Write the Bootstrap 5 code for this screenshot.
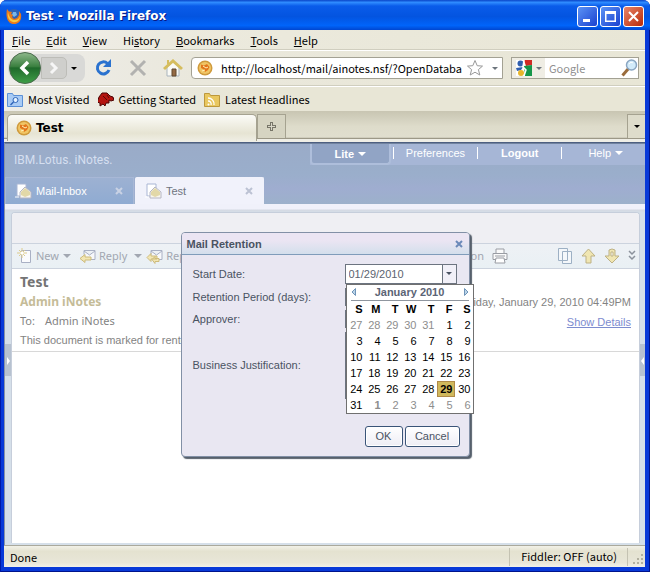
<!DOCTYPE html>
<html lang="en">
<head>
<meta charset="utf-8">
<meta name="viewport" content="width=device-width, initial-scale=1">
<title>Test - Mozilla Firefox</title>
<link rel="stylesheet" href="https://cdn.jsdelivr.net/npm/bootstrap@5.3.0/dist/css/bootstrap.min.css">
<style>
body{font:11px/16px "Noto Sans CJK JP","Noto Sans",sans-serif;color:#000;background:#fff}
svg{display:block;flex:none}
button,input,textarea{font:inherit;color:inherit}
.bare{border:0;background:none;padding:0}
.frame{background:#0839d8;padding:0 5px 5px 4px;border-radius:7px 7px 0 0;box-shadow:inset 1px 0 #0019a8,inset -1px -1px #00138c}
.titlebar{height:30px;margin:0 -5px 0 -4px;padding:2px 6px 0;border-radius:7px 7px 0 0;background:linear-gradient(#0a45c8 0,#2f8cff 8%,#0a5cea 20%,#0354e0 55%,#0064fa 85%,#0046d0 100%);color:#fff}
.titletext{font:bold 12px/16px "DejaVu Sans",sans-serif;text-shadow:1px 1px #0a1883}
.winbtn{width:21px;height:21px;border:1px solid #fff;border-radius:3px;padding:0;background:linear-gradient(135deg,#5c93f5,#1941d0);color:#fff;display:grid;place-items:center}
.winbtn.shut{background:linear-gradient(135deg,#e88468,#b92a08)}
.menubar{height:20px;padding:0 8px;background:linear-gradient(90deg,#f1f0ed,#eceade 25%,#e8e6d6);border-bottom:1px solid #d0cebf}
.tools{height:36px;padding:0 6px 0 4px;background:linear-gradient(90deg,#eeedea,#eae8dc 30%,#e8e6d6);border-top:1px solid #fff;border-bottom:1px solid #d0cebf}
.pill{height:28px;background:#d9d9d7;border-radius:14px 8px 8px 14px;width:77px}
.fwd{width:26px;height:22px;margin-left:-1px;background:#cfcfcc;border:1px solid #bdbdb8;border-radius:0 5px 5px 0}
.urlbox{height:22px;border:1px solid #a3a193;background:#fff;min-width:0}
.urlbox.first{border-radius:4px 0 0 4px;padding-left:5px}
.urlbox input{border:0;outline:0;padding:0;min-width:0;background:none}
.urlbox input::placeholder{color:#8f8f8f;opacity:1}
.engine{background:#efede4;width:33px;height:20px}
.marks{height:25px;padding:0 3px;background:linear-gradient(90deg,#eeede8,#e8e6d6 40%);border-top:1px solid #fff}
.marks a,.menubar a{color:#000;text-decoration:none}
.tabstrip{height:31px;background:linear-gradient(#c8c5b2,#dedccb 50%,#e0dece 85%,#9c9887 87%,#9c9887 90%,#efeee6 91%)}
.fxtab{width:250px;height:27px;margin:3px 0 0 3px;border:1px solid #a5a290;border-bottom:0;border-radius:5px 5px 0 0;background:linear-gradient(#fbfbf7,#e6e4d3 70%,#efeee4);padding-left:8px;font:bold 12px/16px "DejaVu Sans",sans-serif}
.plus{width:29px;height:24px;margin-top:3px;border:1px solid #a5a290;background:#d6d4c2;border-bottom:0}
.all{width:18px;height:24px;margin-top:3px;border:1px solid #a5a290;border-width:1px 0 0 1px;background:#dedccb}
.app{font:11px/14px "Liberation Sans",sans-serif;background:#fff;border-top:1px solid #4d5f80;border-left:1px solid #8894a6}
.apphead{background:linear-gradient(#9aabc8,#9aaecb 50%,#9fadd0 75%,#9cb1cb);height:61px;border-top:1px solid #71839f}
.brand{font:12px/18px Roboto,"Liberation Sans",sans-serif;color:#d5dff0;padding:7px 0 0 9px}
.topmenu{height:21px;background:#a6b6d6;padding-bottom:3px}
.topmenu a{color:#fff;text-decoration:none}
.lite{width:81px;height:21px;border:2px solid #aebedb;border-top:0;border-radius:0 0 4px 4px;background:#91a4c5;font-weight:bold;margin-bottom:-3px}
.rule{width:1px;height:12px;background:#fff}
.doctab{height:27px;width:129px;padding:0 10px 0 9px;background:linear-gradient(#9db1d2,#8fabd2);border:1px solid #a8b8d6;border-bottom:0;color:#fff}
.doctab.on{background:#f1f2fb;border-color:#f1f2fb;color:#6e7480;border-radius:2px 2px 0 0;margin-left:1px}
.doctab button{color:#c6cedf;line-height:10px}
.shell{background:linear-gradient(#f0f1fa 0,#f0f1fa 5px,#d5dae3 6px,#d5dfe9 9px);padding:8px 0 2px}
.edge{width:6px;background:linear-gradient(#d5dfe9 132px,#b7c2d0 132px,#b7c2d0 164px,#d5dfe9 164px)}
.edge svg{margin-top:145px}
.sheet{border:1px solid #c6cedb;border-bottom:0;border-radius:4px 4px 0 0;background:#fff;overflow:hidden;min-width:0}
.blank{height:30px;background:#efeff3}
.actions{height:26px;border:1px solid #ccd3de;border-width:1px 0;background:linear-gradient(#eef1f5,#e9f0f4);font:11px/16px "Noto Sans",sans-serif;color:#a2a7b1;padding:0 3px 0 5px}
.letter{font:11px/16px "Noto Sans",sans-serif;color:#838383;padding:3px 8px 0;border-bottom:1px solid #d8d8d8;height:83px}
.letter h1{font:bold 14px/20px "Noto Sans",sans-serif;color:#747474;margin:0}
.letter .who{font-weight:bold;font-size:12px;line-height:20px;color:#c5bc98}
.letter .to{line-height:18px}
.letter a{color:#7d8ccf}
.arial{font-family:"Liberation Sans",sans-serif}
.veil{position:absolute;inset:0;pointer-events:none}
.dlg{pointer-events:auto;width:289px;background:#e9e7f2;border:1px solid #8290a6;border-radius:4px;box-shadow:2px 2px 1px #56606c;color:#4a5362}
.dlghead{height:22px;padding:2px 6px 0 5px;border-bottom:1px solid #7f9cba;background:linear-gradient(#ebe5f3 35%,#d3dfec);font-weight:bold;border-radius:3px 3px 0 0}
.dlgbody{padding:9px 12px 9px 11px}
.fields{display:grid;grid-template-columns:152px 112px;row-gap:4px}
.fields label{line-height:18px}
.fld{height:18px;width:112px;border:1px solid #6c7480;background:#fff;padding:0 3px;border-radius:0;display:block}
.combo{height:20px}
.combo .drop{width:14px;border-left:1px solid #6c7480;height:18px;background:#f1f0f8}
.combo input{width:96px;border:0;outline:0;padding:0 0 0 3px;color:#5c6470;background:none}
.notes{height:67px;resize:none}
.cal{position:absolute;left:1px;top:20px;width:128px;height:130px;border:1px solid #707070;background:#fff;z-index:2;line-height:16px}
.calhead{height:16px;margin:0 4px;border-bottom:1px solid #8f969f;font-weight:bold;color:#5b6475}
.cal table{width:126px;table-layout:fixed;text-align:right;color:#000;border-collapse:collapse}
.cal td,.cal th{padding:0 2px 0 0;height:16px;line-height:16px}
.cal .off{color:#8d8d8d}
.cal .pick{background:#d0b85c;box-shadow:inset 0 0 0 1px #b08a48;font-weight:bold}
.push{height:21px;border:1px solid #3a5478;border-radius:3px;background:linear-gradient(#fff,#eeedf5);padding:0;color:#4a5362;box-shadow:inset 0 0 0 1px #fff}
.push.ok{width:38px}.push.no{width:55px}
.btnrow{gap:2px;margin:27px -3px 0 0}
.status{height:22px;background:linear-gradient(#f2f1e8,#e4e2d0 25%,#e8e6d8 80%,#f2f1e8);border-top:1px solid #aaa99c;padding-left:6px}
.stat{border-left:1px solid #c4c2b2;padding:0 10px 0 11px;height:18px}
.down{width:0;height:0;border:3px solid transparent;border-top:3px solid currentColor;border-bottom:0}
.down.big{border-width:4px 4px 0}
</style>
<script src="https://cdn.jsdelivr.net/npm/bootstrap@5.3.0/dist/js/bootstrap.bundle.min.js"></script>
</head>
<body>
<svg width="0" height="0" class="position-absolute" aria-hidden="true">
  <symbol id="coin" viewBox="0 0 16 16"><circle cx="8" cy="8" r="7.5" fill="#cf9a3c"/><circle cx="8" cy="8" r="6" fill="#f0c565"/><path d="M4 4.500l3 1 3-1.500 2.500 3-1.500 3-3 2-1-2.500L4 8z" fill="#e2761b"/><path d="M6 6l3 2 2-1M5 11l3-1" stroke="#fff1b8" fill="none"/></symbol>
  <symbol id="mail" viewBox="0 0 17 16"><path d="M2 1h9v12H2z" fill="#fff" stroke="#a9b6d4"/><path d="M0 14h4" stroke="#fff"/><path d="M5 9l5-5 6 5v6H5z" fill="#f8f6ee" stroke="#b6b6c4"/><path d="M6 9l4-4 5 4v3l-5 2-4-2z" fill="#e2d8a8"/></symbol>
  <symbol id="reply" viewBox="0 0 17 15"><path d="M5 1.500h11v9H8M5 1.500v4M5 2l5.500 4L16 2" fill="#f7f8fb" stroke="#a9b0c4"/><path d="M1 9.500l5-4v2.500h6v3H6v2.500z" fill="#f2e6b3" stroke="#cdbb7b"/></symbol>
</svg>

<div class="frame d-flex flex-column min-vh-100">
  <header class="titlebar d-flex align-items-center">
    <svg width="16" height="16" viewBox="0 0 16 16"><circle cx="8" cy="8" r="7" fill="#2c62b8"/><path d="M7 4l3 0 1 3-3 2-2-2z" fill="#7bb6e8"/><path d="M1 1l2 2.500L6 4 5 6l2 1-1 2 2 2 3-1 2-3 0-4 2 3c1 6-2 10-7 10S-1 11 1 1z" fill="#e8791b"/><path d="M2 4c-1 5 1 9 5 10 4 1 7-2 7-6-1 3-3 4.500-6 4S3 9 2 4z" fill="#f9c63f"/></svg>
    <span class="titletext ms-1 flex-grow-1">Test - Mozilla Firefox</span>
    <div class="d-flex" style="gap:2px">
      <button class="winbtn" aria-label="Minimize"><svg width="15" height="15" viewBox="0 0 15 15"><path d="M3 10h7v3H3z" fill="#fff"/></svg></button>
      <button class="winbtn" aria-label="Maximize"><svg width="15" height="15" viewBox="0 0 15 15"><path d="M2 2h11v11H2zM3.500 5v6.500h8V5z" fill="#fff" fill-rule="evenodd"/></svg></button>
      <button class="winbtn shut" aria-label="Close"><svg width="15" height="15" viewBox="0 0 15 15"><path d="M3 3l9 9M12 3l-9 9" stroke="#fff" stroke-width="2"/></svg></button>
    </div>
  </header>

  <nav class="menubar d-flex align-items-center" style="gap:16px">
    <a href="#"><u>F</u>ile</a><a href="#"><u>E</u>dit</a><a href="#"><u>V</u>iew</a><a href="#">Hi<u>s</u>tory</a><a href="#"><u>B</u>ookmarks</a><a href="#"><u>T</u>ools</a><a href="#"><u>H</u>elp</a>
  </nav>

  <div class="tools d-flex align-items-center">
    <div class="pill d-flex align-items-center flex-shrink-0">
      <button class="bare" aria-label="Back"><svg width="34" height="34" viewBox="0 0 34 34"><defs><linearGradient id="gb" x2="0" y2="1"><stop stop-color="#8fb98c"/><stop offset=".45" stop-color="#3b8040"/><stop offset=".5" stop-color="#1f6a2b"/><stop offset="1" stop-color="#3fa048"/></linearGradient></defs><circle cx="17" cy="17" r="15.500" fill="url(#gb)" stroke="#4a6a4c"/><path d="M20 11l-6 6 6 6" fill="none" stroke="#fff" stroke-width="3.500"/></svg></button>
      <button class="bare fwd" aria-label="Forward"><svg class="mx-auto" width="12" height="14" viewBox="0 0 12 14"><path d="M3 2l5 5-5 5" fill="none" stroke="#f6f6f6" stroke-width="3"/></svg></button>
      <button class="bare ms-1" aria-label="Recent pages"><span class="down d-block"></span></button>
    </div>
    <button class="bare ms-2" aria-label="Reload"><svg width="20" height="20" viewBox="0 0 20 20"><path d="M14.500 5.500A6 6 0 1 0 16 12" fill="none" stroke="#2a72cf" stroke-width="3"/><path d="M18 1v8h-8z" fill="#2a72cf"/></svg></button>
    <button class="bare ms-3" aria-label="Stop"><svg width="18" height="18" viewBox="0 0 18 18"><path d="M2 2l14 14M16 2L2 16" stroke="#b2b2b0" stroke-width="3"/></svg></button>
    <button class="bare ms-3" aria-label="Home"><svg width="20" height="18" viewBox="0 0 20 18"><path d="M4 8v9h12V8l-6-5z" fill="#fafaf5" stroke="#a9b4bd"/><path d="M9 10h4v7H9z" fill="#946a45" stroke="#60482f"/><path d="M1 10l9-8 9 8" fill="none" stroke="#d5bd5e" stroke-width="3"/><path d="M4 1h2v4H4z" fill="#d5bd5e"/></svg></button>
    <div class="urlbox first d-flex align-items-center flex-grow-1 mx-2">
      <svg width="16" height="16"><use href="#coin"/></svg>
      <input class="flex-grow-1 ms-2" aria-label="Address" value="http://localhost/mail/ainotes.nsf/?OpenDatabase">
      <svg class="ms-1" width="18" height="18" viewBox="0 0 18 18"><path d="M9 1.500l2.200 5.200 5.300.4-4.100 3.500 1.400 5.400L9 13.200 4.200 16l1.400-5.400L1.500 7.100l5.300-.4z" fill="#fff" stroke="#999"/></svg>
      <span class="down ms-2 me-1 text-secondary"></span>
    </div>
    <div class="urlbox d-flex align-items-center flex-shrink-0">
      <button class="bare engine d-flex align-items-center ps-1" aria-label="Search engine"><svg width="16" height="16" viewBox="0 0 16 16"><path d="M0 0h16v16H0z" fill="#fff"/><path d="M8 0h8v5l-6 1z" fill="#d12a25"/><path d="M8 6l8-1v11H9z" fill="#16964a"/><circle cx="4.500" cy="3.500" r="3" fill="#315fae"/><path d="M0 8l7-1-2 3-4 1z" fill="#315fae"/><circle cx="5" cy="13" r="3" fill="#e8b62a"/><path d="M8 0L7 7l3 3-2 6" fill="none" stroke="#fff" stroke-width="1.500"/></svg><span class="down ms-1 text-secondary"></span></button>
      <input class="ms-1" style="width:72px" aria-label="Search" placeholder="Google">
      <svg width="17" height="18" viewBox="0 0 17 18"><path d="M1.500 16.500l6-7" stroke="#9a6c3c" stroke-width="3"/><circle cx="10.500" cy="6" r="5" fill="#d2ebfa" stroke="#8aa6c2" stroke-width="1.500"/><path d="M8 5c1-2 3-2 4-1" stroke="#fff" fill="none"/></svg>
    </div>
  </div>

  <nav class="marks d-flex align-items-center gap-2">
    <a class="d-flex align-items-center" style="gap:5px" href="#"><svg width="16" height="15" viewBox="0 0 16 15"><path d="M.5 1.500h5l1 2h9v11H.5z" fill="#a9cbf5" stroke="#5a8fd6"/><circle cx="8.500" cy="8" r="2.500" fill="#e6f3ff" stroke="#2e64b8"/><path d="M6.500 10l-3 3" stroke="#2e64b8" stroke-width="1.500"/></svg>Most Visited</a>
    <a class="d-flex align-items-center" style="gap:5px" href="#"><svg width="16" height="15" viewBox="0 0 16 15"><path d="M1 5l3-4 5 0 3 3 3 1 1 3-3 1-2-1 0 3-3 0-1 3-2-2-3 2 0-3-3-1 1-2z" fill="#b41410" stroke="#4c0504"/><path d="M5 4l4 4M9 3l2 3" stroke="#5b0806"/></svg>Getting Started</a>
    <a class="d-flex align-items-center" style="gap:5px" href="#"><svg width="16" height="15" viewBox="0 0 16 15"><path d="M.5 1.500h5l1 2h9v11H.5z" fill="#e9c75f" stroke="#bd983c"/><path d="M4 6a6 6 0 0 1 6 7M4 9a3 3 0 0 1 3 4" fill="none" stroke="#fff" stroke-width="1.300"/><circle cx="4.500" cy="12.500" r="1" fill="#fff"/></svg>Latest Headlines</a>
  </nav>

  <div class="tabstrip d-flex flex-shrink-0">
    <div class="fxtab d-flex align-items-center"><svg width="16" height="16"><use href="#coin"/></svg><span class="ms-1">Test</span></div>
    <button class="bare plus d-grid" style="place-items:center" aria-label="New tab"><svg width="9" height="9" viewBox="0 0 9 9"><path d="M3 0h3v3h3v3H6v3H3V6H0V3h3z" fill="#777568"/><path d="M4 1h1v3h3v1H5v3H4V5H1V4h3z" fill="#d9d7c8"/></svg></button>
    <button class="bare all ms-auto d-grid" style="place-items:center" aria-label="List all tabs"><span class="down"></span></button>
  </div>

  <main class="app position-relative flex-grow-1 d-flex flex-column">
    <div class="apphead d-flex flex-column">
      <div class="d-flex justify-content-between">
        <div class="brand">IBM.Lotus. iNotes.</div>
        <nav class="topmenu d-flex align-items-center">
          <a href="#" class="lite d-flex align-items-center justify-content-center">Lite<span class="down big ms-1"></span></a>
          <span class="rule me-2" style="margin-left:2px"></span>
          <a href="#" class="ms-1 me-2">Preferences</a><span class="rule ms-1"></span>
          <a href="#" class="fw-bold" style="margin:0 23px">Logout</a><span class="rule"></span>
          <a href="#" class="d-flex align-items-center" style="margin:0 22px 0 26px">Help<span class="down big ms-1"></span></a>
        </nav>
      </div>
      <div class="d-flex mt-auto">
        <div class="doctab d-flex align-items-center"><svg width="17" height="16"><use href="#mail"/></svg><span class="flex-grow-1 ms-1">Mail-Inbox</span><button class="bare" aria-label="Close Mail-Inbox"><svg width="8" height="8" viewBox="0 0 8 8"><path d="M1 1l6 6M7 1L1 7" stroke="#c9d2e4" stroke-width="2"/></svg></button></div>
        <div class="doctab on d-flex align-items-center"><svg width="17" height="16"><use href="#mail"/></svg><span class="flex-grow-1 ms-1">Test</span><button class="bare" aria-label="Close Test"><svg width="8" height="8" viewBox="0 0 8 8"><path d="M1 1l6 6M7 1L1 7" stroke="#bcc2d3" stroke-width="2"/></svg></button></div>
      </div>
    </div>
    <div class="shell d-flex flex-grow-1">
      <div class="edge flex-shrink-0"><svg width="5" height="8" viewBox="0 0 5 8"><path d="M2 0l3 4-3 4z" fill="#fff"/></svg></div>
      <div class="sheet flex-grow-1">
        <div class="blank"></div>
        <div class="actions d-flex align-items-center text-nowrap">
          <button class="bare d-flex align-items-center" style="gap:4px"><svg width="15" height="16" viewBox="0 0 15 16"><path d="M4.500 2.500h9v12h-9z" fill="#fafbfd" stroke="#a9b0c4"/><path d="M5 0v10M0 5h10M2 2l6 6M8 2L2 8" stroke="#dccb8d"/><circle cx="5" cy="5" r="1.500" fill="#fff"/></svg>New<span class="down big"></span></button>
          <button class="bare d-flex align-items-center ms-2" style="gap:3px"><svg width="17" height="15"><use href="#reply"/></svg>Reply<span class="down big ms-1"></span></button>
          <button class="bare d-flex align-items-center ms-1" style="gap:3px"><svg width="17" height="15" viewBox="0 0 17 15"><path d="M5 1.500h11v9H8M5 1.500v4M5 2l5.500 4L16 2" fill="#f7f8fb" stroke="#a9b0c4"/><path d="M1 8.500l4-4v2.500h6v3H5v2.500zM6 10.500l3-3v2h4v3H9v2z" fill="#f2e6b3" stroke="#cdbb7b"/></svg>Reply to All</button>
          <button class="bare ms-auto d-flex align-items-center" style="gap:8px;margin-right:50px">Retention<svg width="16" height="16" viewBox="0 0 16 16"><path d="M4 5V1h8v4M1 5.500h14v6H1z" fill="#fafafa" stroke="#999ca3"/><path d="M3 8h10M4 10h8l1 5H3z" fill="#fff" stroke="#999ca3"/></svg></button>
          <button class="bare" aria-label="Copy"><svg width="15" height="16" viewBox="0 0 15 16"><path d="M.5.5h9v12h-9zM4.500 3.500h9v12h-9z" fill="#f4f7fa" stroke="#9db0c4"/></svg></button>
          <button class="bare ms-2" aria-label="Previous"><svg width="15" height="16" viewBox="0 0 15 16"><path d="M7.500 1L14 8h-4v7H5V8H1z" fill="#f0e6b2" stroke="#bdb184"/></svg></button>
          <button class="bare ms-2" aria-label="Next"><svg width="16" height="16" viewBox="0 0 16 16"><path d="M5 8V2l3-1 3 1v6h4l-7 7-7-7z" fill="#f0e6b2" stroke="#bdb184"/><path d="M7 4h2v4H7z" fill="#fff" stroke="#bdb184"/></svg></button>
          <button class="bare ms-2" aria-label="More"><svg width="8" height="12" viewBox="0 0 8 12"><path d="M1 1l3 3 3-3M1 6l3 3 3-3" fill="none" stroke="#8b929c" stroke-width="1.500"/></svg></button>
        </div>
        <article class="letter d-flex justify-content-between text-nowrap">
          <div>
            <h1>Test</h1>
            <div class="who">Admin iNotes</div>
            <div class="to d-flex" style="gap:10px"><span>To:</span><span>Admin iNotes</span></div>
            <div class="arial" style="line-height:20px">This document is marked for rentention</div>
          </div>
          <div class="arial text-end" style="padding-top:20px;line-height:20px">Friday, January 29, 2010 04:49PM<br><a href="#">Show Details</a></div>
        </article>
      </div>
      <div class="edge flex-shrink-0" style="width:5px"><svg width="5" height="8" viewBox="0 0 5 8"><path d="M4 0L1 4l3 4z" fill="#fff"/></svg></div>
    </div>

    <div class="veil d-flex align-items-center justify-content-center">
      <section class="dlg" role="dialog" aria-labelledby="dlgname">
        <div class="dlghead d-flex align-items-center justify-content-between"><span id="dlgname">Mail Retention</span><button class="bare" aria-label="Close dialog"><svg width="8" height="8" viewBox="0 0 8 8"><path d="M1 1l6 6M7 1L1 7" stroke="#6b89b9" stroke-width="2"/></svg></button></div>
        <form class="dlgbody">
          <div class="fields">
            <label for="start" style="line-height:20px">Start Date:</label>
            <div class="position-relative">
              <div class="fld combo d-flex p-0"><input id="start" value="01/29/2010"><button type="button" class="bare drop d-grid" style="place-items:center" aria-label="Choose date"><span class="down"></span></button></div>
              <div class="cal">
                <div class="calhead d-flex justify-content-between align-items-center"><button type="button" class="bare" aria-label="Previous month"><svg width="5" height="8" viewBox="0 0 5 8"><path d="M4.500.5L1 4l3.500 3.500z" fill="#b9d3e8" stroke="#6f94b8"/></svg></button><span>January 2010</span><button type="button" class="bare" aria-label="Next month"><svg width="5" height="8" viewBox="0 0 5 8"><path d="M.5.5L4 4 .5 7.500z" fill="#b9d3e8" stroke="#6f94b8"/></svg></button></div>
                <table>
                  <thead><tr><th>S</th><th>M</th><th>T</th><th>W</th><th>T</th><th>F</th><th>S</th></tr></thead>
                  <tbody>
                    <tr><td class="off">27</td><td class="off">28</td><td class="off">29</td><td class="off">30</td><td class="off">31</td><td>1</td><td>2</td></tr>
                    <tr><td>3</td><td>4</td><td>5</td><td>6</td><td>7</td><td>8</td><td>9</td></tr>
                    <tr><td>10</td><td>11</td><td>12</td><td>13</td><td>14</td><td>15</td><td>16</td></tr>
                    <tr><td>17</td><td>18</td><td>19</td><td>20</td><td>21</td><td>22</td><td>23</td></tr>
                    <tr><td>24</td><td>25</td><td>26</td><td>27</td><td>28</td><td class="pick">29</td><td>30</td></tr>
                    <tr><td>31</td><td class="off fw-bold">1</td><td class="off">2</td><td class="off">3</td><td class="off">4</td><td class="off">5</td><td class="off">6</td></tr>
                  </tbody>
                </table>
              </div>
            </div>
            <label for="days">Retention Period (days):</label><input id="days" class="fld">
            <label for="appr">Approver:</label><input id="appr" class="fld">
            <label for="why" class="align-self-center">Business Justification:</label><textarea id="why" class="fld notes"></textarea>
          </div>
          <div class="btnrow d-flex justify-content-end"><button type="button" class="push ok">OK</button><button type="button" class="push no">Cancel</button></div>
        </form>
      </section>
    </div>
  </main>

  <footer class="status d-flex align-items-center flex-shrink-0">
    <span class="flex-grow-1">Done</span><span class="stat">Fiddler: OFF (auto)</span><span class="stat d-flex align-items-end ps-1 pe-0"><svg width="13" height="13" viewBox="0 0 13 13"><path d="M9 1h2v2H9zM5 5h2v2H5zM9 5h2v2H9zM1 9h2v2H1zM5 9h2v2H5zM9 9h2v2H9z" fill="#b3b1a0"/></svg></span>
  </footer>
</div>
</body>
</html>
